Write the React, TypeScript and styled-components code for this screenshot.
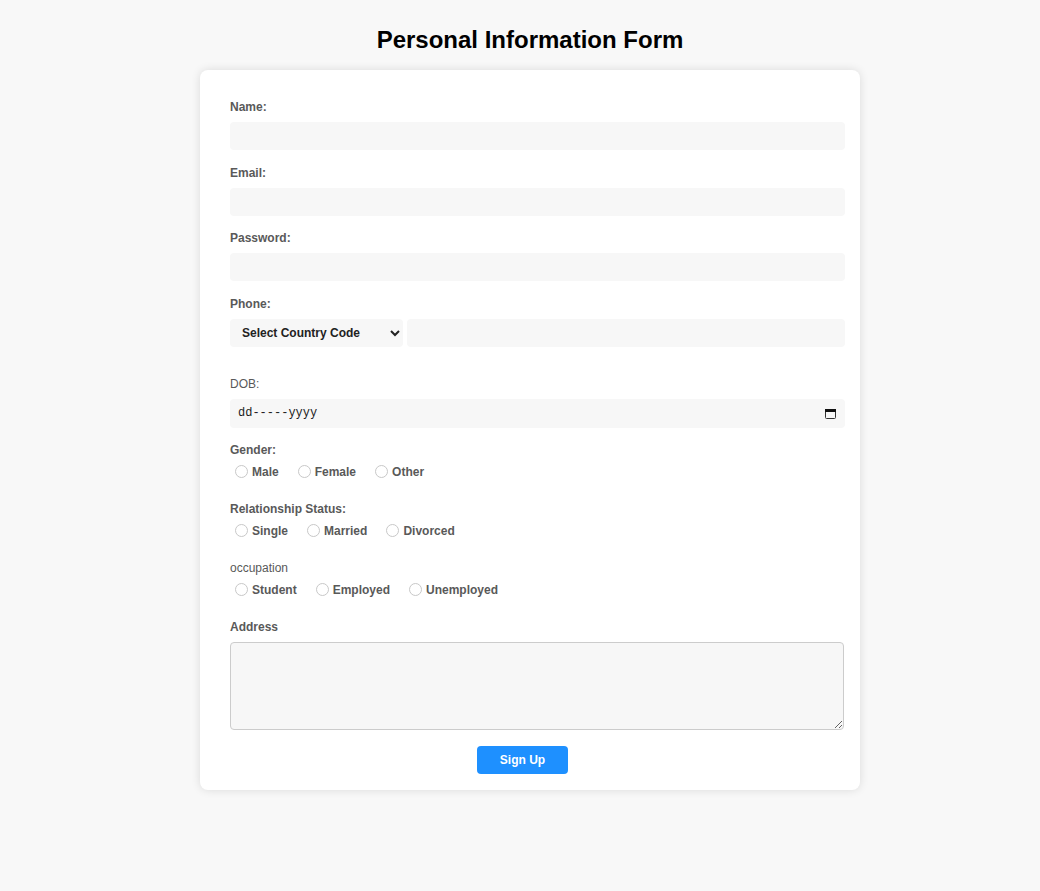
import React from "react";
import styled, { createGlobalStyle } from "styled-components";

const Global = createGlobalStyle`
  html, body { margin: 0; padding: 0; background: #f8f8f8; }
  body { font-family: "Liberation Sans", Arial, sans-serif; }
  * { box-sizing: border-box; }
`;

const Page = styled.div`
  min-height: 891px;
  padding: 26px 0 0 20px;
  display: flex;
  flex-direction: column;
  align-items: center;
`;

const Title = styled.h1`
  margin: 0 0 16px;
  font-size: 24px;
  line-height: 28px;
  font-weight: bold;
  color: #000;
`;

const Card = styled.form`
  width: 660px;
  background: #fff;
  border-radius: 8px;
  box-shadow: 0 0 10px rgba(0, 0, 0, 0.12);
  padding: 30px 15px 16px 30px;
  display: flex;
  flex-direction: column;
`;

const Label = styled.label<{ $plain?: boolean }>`
  display: block;
  font-size: 12px;
  line-height: 14px;
  font-weight: ${(p) => (p.$plain ? "normal" : "bold")};
  color: #595959;
  margin-bottom: 8px;
`;

const Field = styled.div<{ $mb?: number }>`
  margin-bottom: ${(p) => p.$mb ?? 15.5}px;
`;

const TextInput = styled.input`
  display: block;
  width: 100%;
  height: 28px;
  border: none;
  border-radius: 4px;
  background: #f7f7f7;
  padding: 0 8px;
  font-family: "Liberation Sans", Arial, sans-serif;
  font-size: 12px;
  outline: none;
`;

const PhoneRow = styled.div`
  display: flex;
  gap: 4px;
`;

const Select = styled.select`
  width: 173px;
  height: 28px;
  border: none;
  border-radius: 4px;
  background: #f7f7f7;
  padding: 0 6px 0 8px;
  font-family: "Liberation Sans", Arial, sans-serif;
  font-size: 12px;
  font-weight: bold;
  color: #222;
  outline: none;
`;

const PhoneInput = styled(TextInput)`
  flex: 1;
  width: auto;
`;

const DateBox = styled.div`
  position: relative;
`;

const DateInput = styled(TextInput)`
  height: 29px;
  font-family: "Liberation Mono", "Courier New", monospace;
  font-size: 12px;
  &::placeholder { color: #222; opacity: 1; }
`;

const CalIcon = styled.svg`
  position: absolute;
  right: 9px;
  top: 9px;
  pointer-events: none;
`;

const GroupLabel = styled(Label)`
  margin-bottom: 5px;
`;

const RadioRow = styled.div`
  display: flex;
  align-items: center;
  height: 19px;
  margin-bottom: 21px;
`;

const Option = styled.label<{ $gap: number }>`
  display: flex;
  align-items: center;
  font-size: 12px;
  font-weight: bold;
  color: #595959;
  margin-right: ${(p) => p.$gap}px;
`;

const Radio = styled.input`
  appearance: none;
  width: 13px;
  height: 13px;
  margin: 0 4px 0 5px;
  border: 1px solid #c8c8c8;
  border-radius: 50%;
  background: #fff;
`;

const TextArea = styled.textarea`
  display: block;
  width: calc(100% - 1px);
  height: 88px;
  border: 1px solid #ccc;
  border-radius: 4px;
  background: #f7f7f7;
  resize: both;
  outline: none;
  font-family: "Liberation Sans", Arial, sans-serif;
`;

const ButtonRow = styled.div`
  display: flex;
  justify-content: center;
  padding-right: 30px;
`;

const Button = styled.button`
  width: 91px;
  height: 28px;
  border: none;
  border-radius: 4px;
  background: #1e90ff;
  color: #fff;
  font-family: "Liberation Sans", Arial, sans-serif;
  font-size: 12px;
  font-weight: bold;
`;

const groups = [
  { label: "Gender:", plain: false, name: "gender", opts: ["Male", "Female", "Other"], gap: 14 },
  { label: "Relationship Status:", plain: false, name: "rel", opts: ["Single", "Married", "Divorced"], gap: 14 },
  { label: "occupation", plain: true, name: "occ", opts: ["Student", "Employed", "Unemployed"], gap: 14 },
];

export default function App() {
  return (
    <>
      <Global />
      <Page>
        <Title>Personal Information Form</Title>
        <Card onSubmit={(e) => e.preventDefault()}>
          <Field>
            <Label>Name:</Label>
            <TextInput type="text" />
          </Field>
          <Field>
            <Label>Email:</Label>
            <TextInput type="email" />
          </Field>
          <Field>
            <Label>Password:</Label>
            <TextInput type="password" />
          </Field>
          <Field $mb={30}>
            <Label>Phone:</Label>
            <PhoneRow>
              <Select defaultValue="">
                <option value="">Select Country Code</option>
                <option value="+1">+1</option>
                <option value="+44">+44</option>
                <option value="+91">+91</option>
              </Select>
              <PhoneInput type="tel" />
            </PhoneRow>
          </Field>
          <Field>
            <Label $plain>DOB:</Label>
            <DateBox>
              <DateInput type="text" placeholder="dd-----yyyy" />
              <CalIcon width="11" height="11" viewBox="0 0 11 11">
                <rect x="0.5" y="1.5" width="10" height="9" rx="1" fill="none" stroke="#333" />
                <rect x="0" y="1" width="11" height="3" fill="#111" />
              </CalIcon>
            </DateBox>
          </Field>
          {groups.map((g) => (
            <div key={g.name}>
              <GroupLabel $plain={g.plain}>{g.label}</GroupLabel>
              <RadioRow>
                {g.opts.map((o) => (
                  <Option key={o} $gap={g.gap}>
                    <Radio type="radio" name={g.name} value={o} />
                    {o}
                  </Option>
                ))}
              </RadioRow>
            </div>
          ))}
          <Field>
            <Label>Address</Label>
            <TextArea />
          </Field>
          <ButtonRow>
            <Button type="submit">Sign Up</Button>
          </ButtonRow>
        </Card>
      </Page>
    </>
  );
}
